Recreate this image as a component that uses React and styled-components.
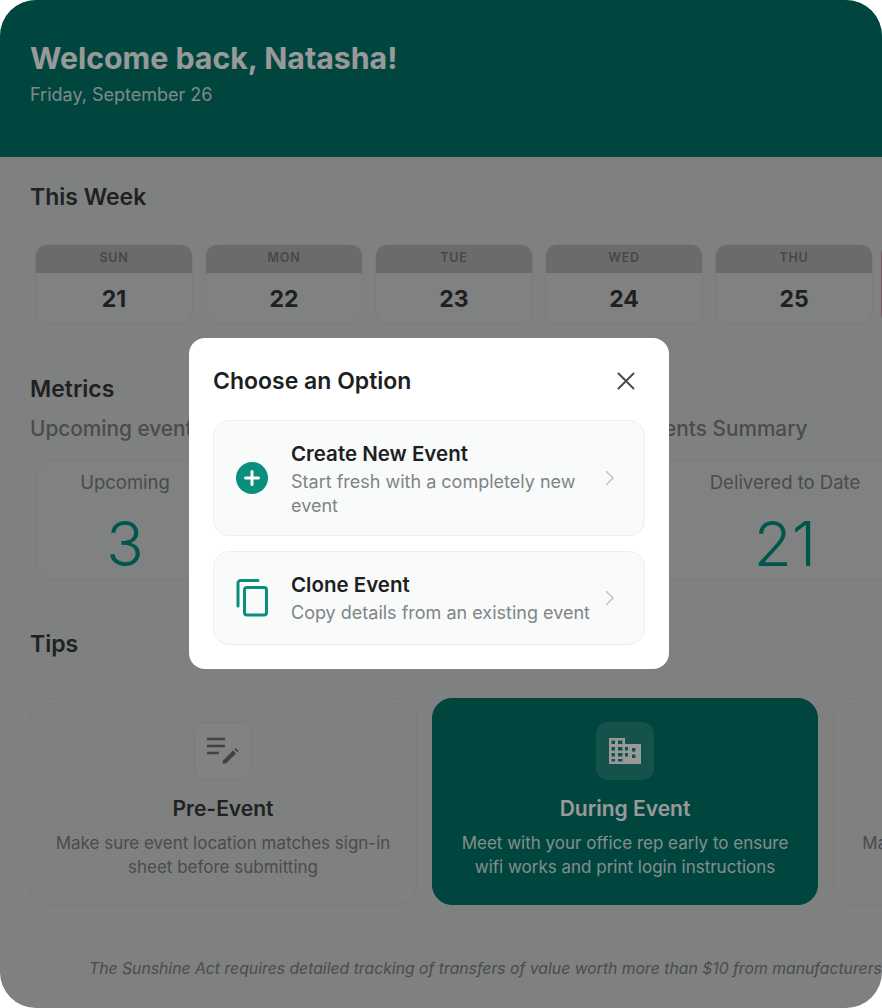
import React from "react";
import styled, { createGlobalStyle } from "styled-components";

const days = [
  { name: "SUN", date: 21 },
  { name: "MON", date: 22 },
  { name: "TUE", date: 23 },
  { name: "WED", date: 24 },
  { name: "THU", date: 25 },
  { name: "FRI", date: 26, today: true },
];

const PenLinesIcon = () => (
  <svg width="34" height="30" viewBox="0 0 34 30" fill="none">
    <path d="M1 3h18M1 10h18M1 17h12" stroke="currentColor" strokeWidth="2.6" />
    <path d="M17 24.5l10-10 3 3-10 10h-3.4z" fill="currentColor" />
    <path d="M28.3 13.2l1.3-1.3 3 3-1.3 1.3z" fill="currentColor" />
  </svg>
);

const BuildingIcon = () => (
  <svg width="34" height="28" viewBox="0 0 34 28" fill="currentColor">
    <path
      fillRule="evenodd"
      d="M1 1h16v6h16v20H1zM3.5 3.5v3.5H7V3.5zM10 3.5v3.5h4.500V3.500zM3.500 10v3.500H7V10zM10 10v3.500h4.500V10zM3.500 16v3.500H7V16zM10 16v3.500h4.500V16zM3.500 22v2.500H7V22zM10 22v2.500h4.500V22zM17 10v3.500h3V10zM24 11v3.500h3.500V11zM17 16v3.500h3V16zM24 17.500v3.500h3.500v-3.500z"
    />
  </svg>
);

const PlusIcon = () => (
  <svg width="32" height="32" viewBox="0 0 32 32">
    <circle cx="16" cy="16" r="16" fill="#0b8f7d" />
    <path
      d="M16 9.500v13M9.500 16h13"
      stroke="#fff"
      strokeWidth="3"
      strokeLinecap="round"
    />
  </svg>
);

const CopyIcon = () => (
  <svg width="32" height="38" viewBox="0 0 32 38" fill="none">
    <path
      d="M2 27V4a2.500 2.500 0 0 1 2.500-2.500H22"
      stroke="#0b8f7d"
      strokeWidth="3"
      strokeLinecap="round"
    />
    <rect x="8.500" y="8.500" width="22" height="27.500" rx="2.500" stroke="#0b8f7d" strokeWidth="3" />
  </svg>
);

const CloseIcon = () => (
  <svg width="18" height="18" viewBox="0 0 18 18" fill="none">
    <path d="M1.500 1.500l15 15M16.500 1.500l-15 15" stroke="#4a4d50" strokeWidth="2" strokeLinecap="round" />
  </svg>
);

const Chevron = () => (
  <ChevronWrap>
    <svg width="10" height="16" viewBox="0 0 10 16" fill="none">
      <path d="M1.500 1.500L8 8l-6.500 6.500" stroke="#c3c6c9" strokeWidth="1.600" strokeLinecap="round" strokeLinejoin="round" />
    </svg>
  </ChevronWrap>
);

const App = () => {
  return (
    <Frame>
      <GlobalStyle />
      <Header>
        <Welcome>Welcome back, Natasha!</Welcome>
        <DateLine>Friday, September 26</DateLine>
      </Header>

      <Main>
        <SectionTitle>This Week</SectionTitle>
        <WeekRow>
          {days.map((d) => (
            <DayCard key={d.name} $today={d.today}>
              <DayName $today={d.today}>{d.name}</DayName>
              <DayDate>{d.date}</DayDate>
            </DayCard>
          ))}
        </WeekRow>

        <MetricsTitle>Metrics</MetricsTitle>
        <MetricsRow>
          <MetricsGroup>
            <GroupTitle>Upcoming events</GroupTitle>
            <MetricCard>
              <MetricLabel>Upcoming</MetricLabel>
              <MetricValue>3</MetricValue>
            </MetricCard>
          </MetricsGroup>
          <SummaryGroup>
            <GroupTitle>Events Summary</GroupTitle>
            <SummaryCard>
              <MetricLabel>Delivered to Date</MetricLabel>
              <MetricValue>21</MetricValue>
            </SummaryCard>
          </SummaryGroup>
        </MetricsRow>

        <TipsTitle>Tips</TipsTitle>
        <TipsRow>
          <TipCard>
            <TipIcon>
              <PenLinesIcon />
            </TipIcon>
            <TipTitle>Pre-Event</TipTitle>
            <TipText>
              Make sure event location matches sign-in sheet before submitting
            </TipText>
          </TipCard>
          <TipCard $active>
            <TipIcon $active>
              <BuildingIcon />
            </TipIcon>
            <TipTitle $active>During Event</TipTitle>
            <TipText $active>
              Meet with your office rep early to ensure wifi works and print
              login instructions
            </TipText>
          </TipCard>
          <TipCard>
            <TipIcon />
            <TipTitle>Post-Event</TipTitle>
            <TipText>
              Make sure all attendee signatures are set before closing out
            </TipText>
          </TipCard>
        </TipsRow>

        <Footnote>
          The Sunshine Act requires detailed tracking of transfers of value
          worth more than $10 from manufacturers
        </Footnote>
      </Main>

      <Overlay>
        <Modal>
          <ModalHead>
            <ModalTitle>Choose an Option</ModalTitle>
            <CloseButton>
              <CloseIcon />
            </CloseButton>
          </ModalHead>
          <OptionList>
            <Option>
              <OptionIcon>
                <PlusIcon />
              </OptionIcon>
              <OptionBody>
                <OptionTitle>Create New Event</OptionTitle>
                <OptionText>Start fresh with a completely new event</OptionText>
              </OptionBody>
              <Chevron />
            </Option>
            <Option>
              <OptionIcon>
                <CopyIcon />
              </OptionIcon>
              <OptionBody>
                <OptionTitle>Clone Event</OptionTitle>
                <OptionText>Copy details from an existing event</OptionText>
              </OptionBody>
              <Chevron />
            </Option>
          </OptionList>
        </Modal>
      </Overlay>
    </Frame>
  );
};

export default App;

const GlobalStyle = createGlobalStyle`
  html, body {
    margin: 0;
    padding: 0;
    background: #fff;
  }
  body {
    font-family: "Inter", "Liberation Sans", sans-serif;
  }
  * {
    box-sizing: border-box;
  }
`;

const Frame = styled.div`
  position: relative;
  width: 882px;
  height: 1008px;
  overflow: hidden;
  border-radius: 36px;
  background: #d4d5d6;
`;

const Header = styled.header`
  height: 157px;
  padding: 38px 30px 0;
  background: #007569;
`;

const Welcome = styled.h1`
  margin: 0;
  font-size: 30.300px;
  line-height: 40px;
  font-weight: 700;
  color: #fff;
`;

const DateLine = styled.div`
  margin-top: 6px;
  font-size: 18px;
  line-height: 22px;
  color: #cfe6e2;
`;

const Main = styled.main`
  padding: 25px 0 0 30px;
  width: 882px;
`;

const SectionTitle = styled.h2`
  margin: 0;
  font-size: 23px;
  line-height: 30px;
  font-weight: 600;
  color: #36383a;
`;

const WeekRow = styled.div`
  display: flex;
  gap: 12px;
  margin-top: 32px;
  padding-left: 5px;
`;

const DayCard = styled.div`
  flex: none;
  width: 158px;
  height: 80px;
  border-radius: 12px;
  overflow: hidden;
  background: #d6d7d8;
  border: 1px solid #cbcdce;
  ${(p) =>
    p.$today &&
    `
    transform: scale(1.05);
    border: 2px solid #cc8ea0;
  `}
`;

const DayName = styled.div`
  height: 29px;
  margin: -1px -1px 0;
  background: ${(p) => (p.$today ? "#cc8ea0" : "#b3b3b4")};
  text-align: center;
  font-size: 12.500px;
  line-height: 28px;
  font-weight: 600;
  letter-spacing: 0.8px;
  color: #76787a;
`;

const DayDate = styled.div`
  text-align: center;
  font-size: 23px;
  line-height: 52px;
  font-weight: 700;
  color: #333537;
`;

const MetricsTitle = styled(SectionTitle)`
  margin-top: 50px;
`;

const MetricsRow = styled.div`
  display: flex;
  margin-top: 10px;
`;

const MetricsGroup = styled.section`
  flex: none;
  width: 610px;
`;

const SummaryGroup = styled.section`
  flex: none;
  width: 300px;
`;

const GroupTitle = styled.h3`
  margin: 0;
  font-size: 20.800px;
  line-height: 30px;
  font-weight: 500;
  color: #7c7e81;
`;

const MetricCard = styled.div`
  width: 180px;
  height: 120px;
  margin: 16px 0 0 5px;
  padding-top: 9px;
  border: 1px solid #cbcdce;
  border-radius: 16px;
  background: #d6d7d8;
  text-align: center;
`;

const SummaryCard = styled(MetricCard)`
  width: 250px;
  margin-left: 20px;
`;

const MetricLabel = styled.div`
  font-size: 18.500px;
  line-height: 24px;
  color: #7c7e81;
`;

const MetricValue = styled.div`
  margin-top: 15px;
  font-size: 62px;
  line-height: 70px;
  font-weight: 300;
  color: #009080;
`;

const TipsTitle = styled(SectionTitle)`
  margin-top: 49px;
`;

const TipsRow = styled.div`
  display: flex;
  gap: 15px;
  margin: 39px 0 0 -1px;
`;

const TipCard = styled.article`
  flex: none;
  width: ${(p) => (p.$active ? "386px" : "388px")};
  height: 207px;
  padding: 23px 26px 0;
  border-radius: 20px;
  border: 1px solid ${(p) => (p.$active ? "#007569" : "#cbcdce")};
  background: ${(p) => (p.$active ? "#007569" : "#d4d5d6")};
  text-align: center;
`;

const TipIcon = styled.div`
  display: flex;
  align-items: center;
  justify-content: center;
  width: 58px;
  height: 58px;
  margin: 0 auto;
  border-radius: 12px;
  border: 1px solid ${(p) => (p.$active ? "transparent" : "#cbcdce")};
  background: ${(p) => (p.$active ? "rgba(255, 255, 255, 0.15)" : "#d8d9da")};
  color: ${(p) => (p.$active ? "#fff" : "#6c6e70")};
`;

const TipTitle = styled.h4`
  margin: 15px 0 0;
  font-size: 21px;
  line-height: 28px;
  font-weight: 600;
  color: ${(p) => (p.$active ? "#fff" : "#36383a")};
`;

const TipText = styled.p`
  margin: 8px -6px 0;
  font-size: 17px;
  line-height: 24px;
  color: ${(p) => (p.$active ? "#dcebe8" : "#7c7e81")};
`;

const Footnote = styled.p`
  margin: 53px 0 0 59px;
  width: 900px;
  white-space: nowrap;
  font-size: 15.750px;
  line-height: 22px;
  font-style: italic;
  color: #7c7e81;
`;

const Overlay = styled.div`
  position: absolute;
  inset: 0;
  display: flex;
  align-items: center;
  justify-content: center;
  padding: 0 24px 1px 0;
  background: rgba(0, 0, 0, 0.4);
`;

const Modal = styled.div`
  width: 480px;
  height: 331px;
  padding: 24px;
  border-radius: 16px;
  background: #fff;
`;

const ModalHead = styled.div`
  display: flex;
  align-items: center;
  justify-content: space-between;
  height: 38px;
  margin-bottom: 20px;
`;

const ModalTitle = styled.h2`
  margin: 0;
  font-size: 23px;
  line-height: 38px;
  font-weight: 600;
  color: #1d1f21;
`;

const CloseButton = styled.button`
  display: flex;
  padding: 0;
  margin-right: 10px;
  border: 0;
  background: none;
`;

const OptionList = styled.div`
  display: flex;
  flex-direction: column;
  gap: 15px;
`;

const Option = styled.div`
  display: flex;
  align-items: center;
  min-height: 94px;
  padding: 17px 29px 17px 21px;
  border: 1px solid #eceef0;
  border-radius: 16px;
  background: #f9fafa;
`;

const OptionIcon = styled.div`
  flex: none;
  display: flex;
  justify-content: center;
  width: 33px;
  margin-right: 23px;
`;

const OptionBody = styled.div`
  flex: 1;
  align-self: flex-start;
  min-width: 0;
  padding-top: 2px;
`;

const OptionTitle = styled.div`
  font-size: 20.500px;
  line-height: 28px;
  font-weight: 600;
  color: #1d1f21;
`;

const OptionText = styled.div`
  margin-top: 2px;
  font-size: 18px;
  line-height: 24px;
  color: #7f8489;
`;

const ChevronWrap = styled.div`
  flex: none;
  display: flex;
  margin-left: 12px;
`;
